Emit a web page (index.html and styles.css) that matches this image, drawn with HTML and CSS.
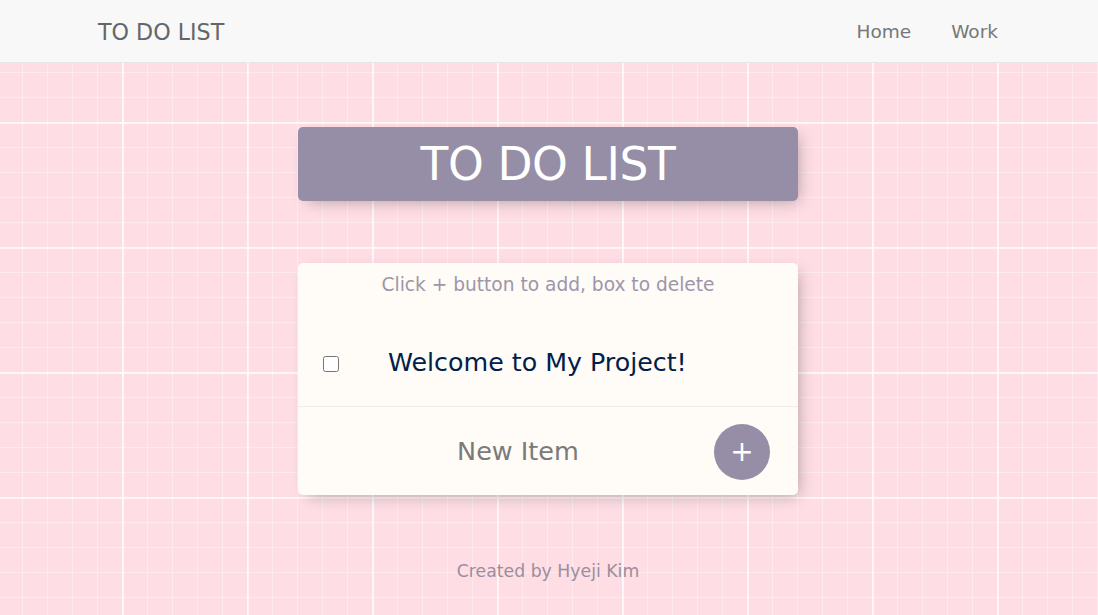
FILE: index.html
```html
<!DOCTYPE html>
<html lang="en">
<head>
<meta charset="utf-8">
<title>To Do List</title>
<link rel="stylesheet" href="styles.css">
</head>
<body>
  <nav class="navbar">
    <a class="brand" href="#">TO DO LIST</a>
    <ul class="nav-links">
      <li><a href="#">Home</a></li>
      <li><a href="#">Work</a></li>
    </ul>
  </nav>
  <main class="content">
    <div class="heading"><h1>TO DO LIST</h1></div>
    <div class="card">
      <p class="hint">Click + button to add, box to delete</p>
      <div class="item">
        <input type="checkbox" class="check">
        <p class="item-text">Welcome to My Project!</p>
      </div>
      <form class="new-item" onsubmit="return false">
        <input type="text" class="new-input" placeholder="New Item">
        <button type="button" class="add-btn">+</button>
      </form>
    </div>
    <footer class="footer">Created by Hyeji Kim</footer>
  </main>
</body>
</html>
```
FILE: styles.css
```css
* { box-sizing: border-box; }
html, body { margin: 0; padding: 0; height: 100%; }
body {
  font-family: "DejaVu Sans", "Noto Sans", sans-serif;
  background-color: #fedde5;
  background-image:
    linear-gradient(to right, rgba(255,255,255,0.7) 2px, transparent 2px),
    linear-gradient(to bottom, rgba(255,255,255,0.7) 2px, transparent 2px),
    linear-gradient(to right, rgba(255,255,255,0.35) 1px, transparent 1px),
    linear-gradient(to bottom, rgba(255,255,255,0.35) 1px, transparent 1px);
  background-size: 125px 125px, 125px 125px, 25px 25px, 25px 25px;
  background-position: -3px -3px, -3px -3px, -3px -3px, -3px -3px;
  overflow: hidden;
}
.navbar {
  height: 63px;
  background: #f8f8f8;
  border-bottom: 1px solid #e6e6e6;
  display: flex;
  align-items: center;
  justify-content: space-between;
  padding: 0 100px 0 98px;
  position: relative;
}
.brand {
  color: #666;
  text-decoration: none;
  font-size: 22.2px;
  margin-top: 1px;
}
.nav-links {
  list-style: none;
  margin: 0;
  padding: 0;
  display: flex;
  gap: 40px;
}
.nav-links a {
  color: #777;
  text-decoration: none;
  font-size: 18.5px;
}
.content {
  display: flex;
  flex-direction: column;
  align-items: center;
  padding-right: 2px;
}
.heading {
  margin-top: 64px;
  width: 500px;
  height: 74px;
  background: #958ea6;
  border-radius: 5px;
  box-shadow: 5px 5px 15px -5px rgba(0,0,0,0.3);
  display: flex;
  align-items: center;
  justify-content: center;
}
.heading h1 {
  margin: 0;
  color: #fff;
  font-weight: normal;
  font-size: 45.5px;
  letter-spacing: -0.4px;
  line-height: 1;
  margin-top: 1px;
}
.card {
  margin-top: 62px;
  width: 500px;
  background: #fffbf6;
  border-radius: 5px;
  box-shadow: 5px 5px 15px -5px rgba(0,0,0,0.3);
}
.hint {
  margin: 0;
  height: 56px;
  padding-top: 10px;
  line-height: 24px;
  text-align: center;
  color: #9d96ab;
  font-size: 18.6px;
}
.item {
  height: 88px;
  display: flex;
  align-items: center;
  border-bottom: 1px solid #f0ece8;
  padding-left: 25px;
}
.check {
  margin: 0;
  width: 16px;
  height: 16px;
  margin-top: 2px;
}
.item-text {
  margin: 0 0 0 49px;
  color: #00204a;
  font-size: 25.3px;
}
.new-item {
  height: 88px;
  display: flex;
  align-items: center;
  padding: 0 28px 0 24px;
  margin: 0;
}
.new-input {
  flex: 1;
  min-width: 0;
  border: none;
  background: transparent;
  text-align: center;
  font-family: inherit;
  font-size: 25.5px;
  color: #333;
  outline: none;
}
.new-input::placeholder { color: #7a7a7a; }
.add-btn {
  width: 56px;
  height: 56px;
  border-radius: 50%;
  border: none;
  background: #958ea6;
  color: #fff;
  font-family: inherit;
  font-size: 28px;
  line-height: 56px;
  padding: 0;
  margin-top: 1px;
}
.footer {
  margin-top: 66px;
  color: #9c8d9c;
  font-size: 17.3px;
}
```
